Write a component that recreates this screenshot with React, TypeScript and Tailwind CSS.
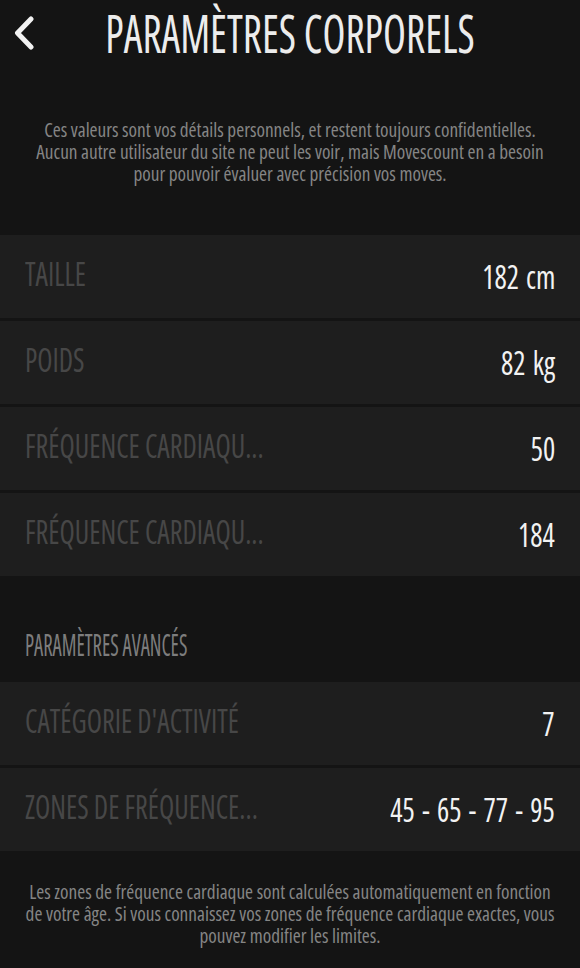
const bodyRows = [
  { label: "TAILLE", value: "182 cm" },
  { label: "POIDS", value: "82 kg" },
  { label: "FRÉQUENCE CARDIAQU...", value: "50" },
  { label: "FRÉQUENCE CARDIAQU...", value: "184" },
];

const advancedRows = [
  { label: "CATÉGORIE D'ACTIVITÉ", value: "7" },
  { label: "ZONES DE FRÉQUENCE...", value: "45 - 65 - 77 - 95" },
];

function Row({ label, value }: { label: string; value: string }) {
  return (
    <div className="h-[83px] bg-[#1e1e1e] flex items-center justify-between px-[25px]">
      <span className="inline-block whitespace-nowrap origin-left scale-x-[0.875] text-[32px] leading-none text-[#474747] mb-[6px]">
        {label}
      </span>
      <span className="inline-block whitespace-nowrap origin-right scale-x-[0.9] text-[32px] leading-none font-medium text-[#f2f2f2] [word-spacing:2px]">
        {value}
      </span>
    </div>
  );
}

function Note({ lines, className }: { lines: string[]; className: string }) {
  return (
    <div className={"flex justify-center " + className}>
      <div className="flex flex-col items-center text-[19.3px] leading-[22px] text-[#858585]">
        {lines.map((l) => (
          <span key={l} className="whitespace-nowrap">{l}</span>
        ))}
      </div>
    </div>
  );
}

export default function App() {
  return (
    <div className="w-[580px] min-h-[968px] overflow-hidden bg-[#141414] flex flex-col font-['Open_Sans',sans-serif] [font-stretch:75%]">
      {/* header: chevron and title share one grid cell */}
      <div className="h-[66px] grid items-center">
        <svg width="20" height="34" viewBox="0 0 20 34" className="ml-[14px] [grid-area:1/1] justify-self-start">
          <polyline points="17,3 3.5,17 17,31" fill="none" stroke="#f2f2f2" strokeWidth="5" strokeLinecap="round" strokeLinejoin="round" />
        </svg>
        <h1 className="[grid-area:1/1] justify-self-center whitespace-nowrap scale-x-[0.81] text-[52px] leading-none text-[#ececec]">
          PARAMÈTRES CORPORELS
        </h1>
      </div>

      <Note
        className="h-[169px] items-center pt-[3px]"
        lines={[
          "Ces valeurs sont vos détails personnels, et restent toujours confidentielles.",
          "Aucun autre utilisateur du site ne peut les voir, mais Movescount en a besoin",
          "pour pouvoir évaluer avec précision vos moves.",
        ]}
      />

      <div className="flex flex-col gap-[3px]">
        {bodyRows.map((r, i) => (
          <Row key={i} {...r} />
        ))}
      </div>

      <div className="h-[106px] flex items-center pt-[32px] px-[25px]">
        <span className="inline-block whitespace-nowrap origin-left scale-x-[0.69] text-[30px] leading-none text-[#7d7d7d]">
          PARAMÈTRES AVANCÉS
        </span>
      </div>

      <div className="flex flex-col gap-[3px]">
        {advancedRows.map((r, i) => (
          <Row key={i} {...r} />
        ))}
      </div>

      <Note
        className="flex-1 pt-[30px]"
        lines={[
          "Les zones de fréquence cardiaque sont calculées automatiquement en fonction",
          "de votre âge. Si vous connaissez vos zones de fréquence cardiaque exactes, vous",
          "pouvez modifier les limites.",
        ]}
      />
    </div>
  );
}
